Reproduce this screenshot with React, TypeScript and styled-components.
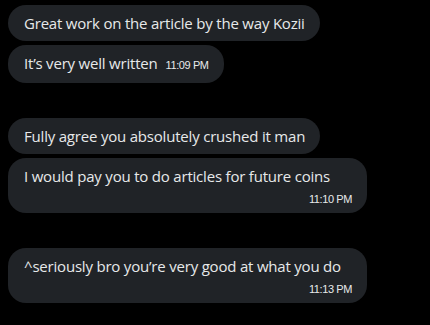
import React from "react";
import styled, { createGlobalStyle } from "styled-components";

const GlobalStyle = createGlobalStyle`
  html, body {
    margin: 0;
    padding: 0;
    background: #000000;
  }
  body {
    font-family: "Open Sans", "Noto Sans", "Liberation Sans", sans-serif;
    -webkit-font-smoothing: antialiased;
  }
`;

type Msg = { text: string; time?: string; below?: boolean };

const groups: Msg[][] = [
  [
    { text: "Great work on the article by the way Kozii" },
    { text: "It\u2019s very well written", time: "11:09 PM" },
  ],
  [
    { text: "Fully agree you absolutely crushed it man" },
    { text: "I would pay you to do articles for future coins", time: "11:10 PM", below: true },
  ],
  [{ text: "^seriously bro you\u2019re very good at what you do", time: "11:13 PM", below: true }],
];

const App = () => {
  return (
    <Wrapper>
      <GlobalStyle />
      {groups.map((group, i) => (
        <Group key={i}>
          {group.map((m, j) => (
            <Bubble key={j} below={m.below}>
              <Text>{m.text}</Text>
              {m.time && <Time below={m.below}>{m.time}</Time>}
            </Bubble>
          ))}
        </Group>
      ))}
    </Wrapper>
  );
};

const Wrapper = styled.div`
  display: flex;
  flex-direction: column;
  align-items: flex-start;
  gap: 35px;
  padding: 5px 8px;
  width: 430px;
  height: 325px;
  box-sizing: border-box;
`;

const Group = styled.div`
  display: flex;
  flex-direction: column;
  align-items: flex-start;
  gap: 4px;
`;

const Bubble = styled.div<{ below?: boolean }>`
  display: flex;
  flex-wrap: wrap;
  align-items: baseline;
  box-sizing: border-box;
  width: ${(p) => (p.below ? "359px" : "auto")};
  padding: ${(p) => (p.below ? "8px 15px 6px 16px" : "8px 15px 8px 16px")};
  background: #202327;
  border-radius: 18px;
  color: #e7e9ea;
`;

const Text = styled.span`
  font-size: 15px;
  line-height: 20px;
  letter-spacing: -0.2px;
`;

const Time = styled.span<{ below?: boolean }>`
  font-family: "Liberation Sans", Arial, sans-serif;
  font-size: 11px;
  letter-spacing: -0.4px;
  line-height: ${(p) => (p.below ? "16px" : "20px")};
  color: #e7e9ea;
  margin-left: ${(p) => (p.below ? "auto" : "8px")};
  margin-top: ${(p) => (p.below ? "5px" : "0")};
  width: ${(p) => (p.below ? "100%" : "auto")};
  text-align: right;
`;

export default App;
